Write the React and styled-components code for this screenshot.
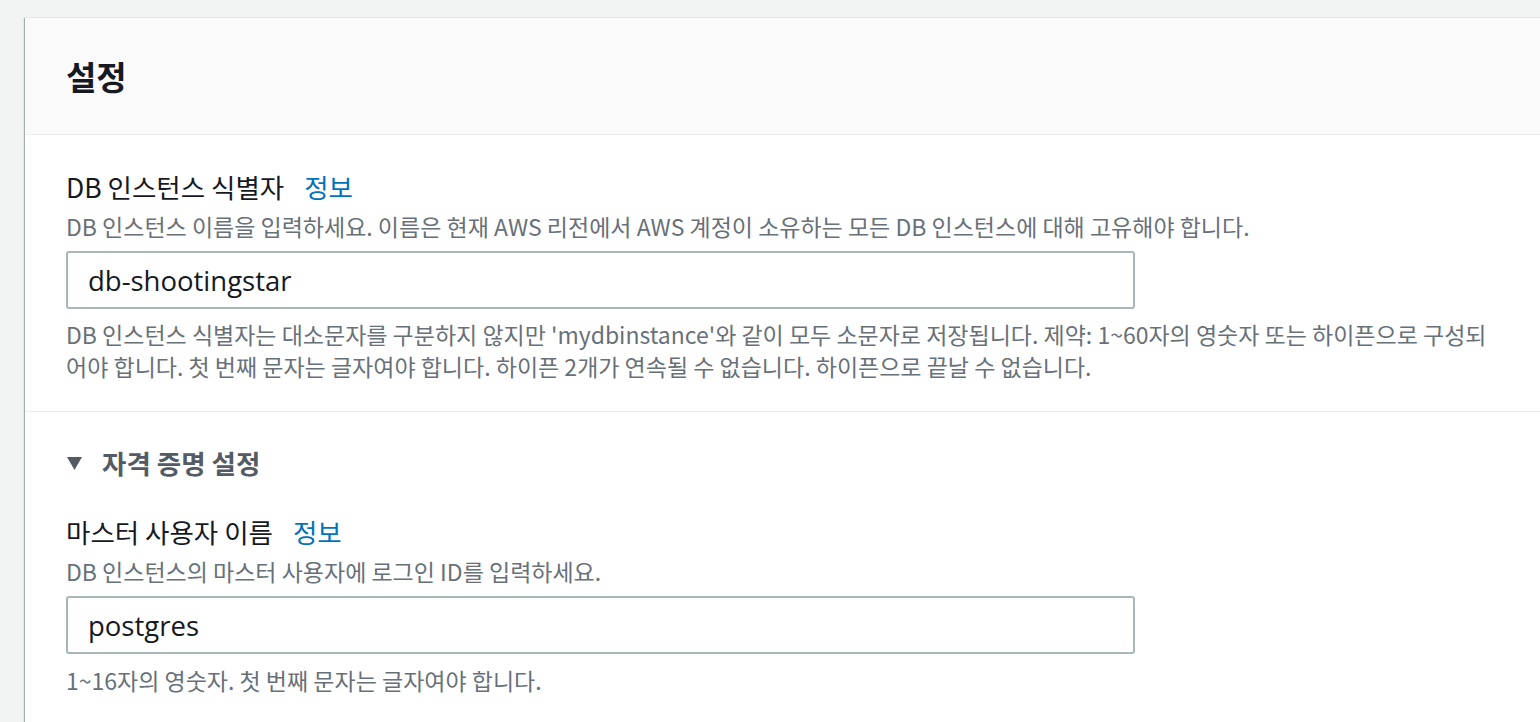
import React from "react";
import styled, { createGlobalStyle } from "styled-components";

const GlobalStyle = createGlobalStyle`
  html, body {
    margin: 0;
    padding: 0;
    background: #f2f3f3;
    overflow: hidden;
  }
  body {
    font-family: "Noto Sans CJK KR", "Noto Sans", sans-serif;
    color: #16191f;
  }
`;

const Page = styled.div`
  padding-top: 18px;
  padding-left: 25px;
`;

const Panel = styled.div`
  background: #ffffff;
  margin-right: -40px;
  box-shadow: -1px 0 1px rgba(0, 28, 36, 0.3), 0 1px 1px rgba(0, 28, 36, 0.15);
  min-height: 720px;
`;

const PanelHeader = styled.div`
  height: 116px;
  display: flex;
  align-items: center;
  padding-left: 41px;
  background: #fafafa;
  border-bottom: 1px solid #eaeded;
`;

const Title = styled.h2`
  margin: 0;
  font-size: 33px;
  font-weight: 700;
  line-height: 36px;
  color: #16191f;
`;

const Section = styled.div`
  padding: ${(p) => p.$top}px 60px ${(p) => p.$bottom}px 41px;
  border-bottom: ${(p) => (p.$divider ? "1px solid #eaeded" : "none")};
`;

const Field = styled.div`
  display: flex;
  flex-direction: column;
`;

const LabelRow = styled.div`
  display: flex;
  align-items: baseline;
  gap: 20px;
  font-size: 26.5px;
  line-height: 30px;
  color: #16191f;
`;

const InfoLink = styled.a`
  color: #0073bb;
  text-decoration: none;
  font-size: 26.5px;
`;

const Description = styled.div`
  margin-top: 10px;
  font-size: 23px;
  line-height: 28px;
  color: #687078;
  white-space: nowrap;
`;

const Input = styled.input`
  box-sizing: border-box;
  margin-top: 11px;
  width: 1069px;
  height: 58px;
  padding: 0 20px;
  border: 2px solid #aab7b8;
  border-radius: 3px;
  font-family: "Open Sans", "Noto Sans", sans-serif;
  font-size: 27.5px;
  color: #16191f;
  background: #ffffff;
  outline: none;
`;

const Help = styled.div`
  margin-top: ${(p) => p.$gap || 9}px;
  font-size: 23px;
  line-height: 32px;
  color: #687078;
  white-space: nowrap;
`;

const ExpandHeader = styled.div`
  display: flex;
  align-items: center;
  gap: 20px;
  font-size: 26.5px;
  line-height: 30px;
  font-weight: 700;
  color: #545b64;
  margin-bottom: 39px;
`;

const Caret = () => (
  <svg width="15" height="13" viewBox="0 0 15 13" style={{ marginLeft: 1 }}>
    <path d="M0 0 H15 L7.5 13 Z" fill="#545b64" />
  </svg>
);

export default function App() {
  return (
    <Page>
      <GlobalStyle />
      <Panel>
        <PanelHeader>
          <Title>설정</Title>
        </PanelHeader>
        <Section $top={37} $bottom={29} $divider>
          <Field>
            <LabelRow>
              <span>DB 인스턴스 식별자</span>
              <InfoLink href="#">정보</InfoLink>
            </LabelRow>
            <Description>
              DB 인스턴스 이름을 입력하세요. 이름은 현재 AWS 리전에서 AWS 계정이 소유하는 모든 DB 인스턴스에 대해 고유해야 합니다.
            </Description>
            <Input defaultValue="db-shootingstar" />
            <Help>
              DB 인스턴스 식별자는 대소문자를 구분하지 않지만 'mydbinstance'와 같이 모두 소문자로 저장됩니다. 제약: 1~60자의 영숫자 또는 하이픈으로 구성되
              <br />
              어야 합니다. 첫 번째 문자는 글자여야 합니다. 하이픈 2개가 연속될 수 없습니다. 하이픈으로 끝날 수 없습니다.
            </Help>
          </Field>
        </Section>
        <Section $top={36} $bottom={20}>
          <ExpandHeader>
            <Caret />
            <span>자격 증명 설정</span>
          </ExpandHeader>
          <Field>
            <LabelRow>
              <span>마스터 사용자 이름</span>
              <InfoLink href="#">정보</InfoLink>
            </LabelRow>
            <Description>DB 인스턴스의 마스터 사용자에 로그인 ID를 입력하세요.</Description>
            <Input defaultValue="postgres" />
            <Help $gap={10}>1~16자의 영숫자. 첫 번째 문자는 글자여야 합니다.</Help>
          </Field>
        </Section>
      </Panel>
    </Page>
  );
}
